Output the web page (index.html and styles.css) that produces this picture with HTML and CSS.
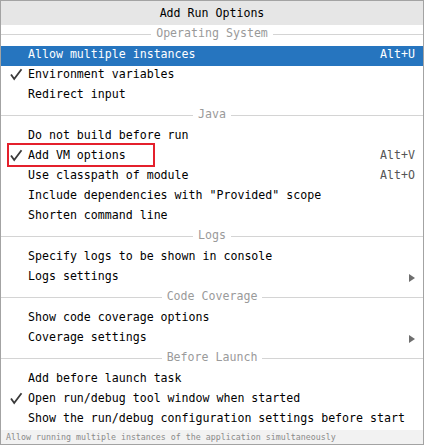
FILE: index.html
```html
<!DOCTYPE html>
<html>
<head>
<meta charset="utf-8">
<link rel="stylesheet" href="styles.css">
</head>
<body>
<div class="popup">
  <div class="title">Add Run Options</div>

  <div class="sep"><span class="line"></span><span class="sep-text">Operating System</span><span class="line"></span></div>
  <div class="row selected"><span class="gutter"></span><span class="label">Allow multiple instances</span><span class="key">Alt+U</span></div>
  <div class="row"><span class="gutter"><svg class="check" width="13" height="13" viewBox="0 0 13 13"><path d="M1 6.5 L4.2 11 L11.5 1.2" fill="none" stroke="#3a3a3a" stroke-width="1.8"/></svg></span><span class="label">Environment variables</span></div>
  <div class="row"><span class="gutter"></span><span class="label">Redirect input</span></div>

  <div class="sep"><span class="line"></span><span class="sep-text">Java</span><span class="line"></span></div>
  <div class="row"><span class="gutter"></span><span class="label">Do not build before run</span></div>
  <div class="row marked"><span class="gutter"><svg class="check" width="13" height="13" viewBox="0 0 13 13"><path d="M1 6.5 L4.2 11 L11.5 1.2" fill="none" stroke="#3a3a3a" stroke-width="1.8"/></svg></span><span class="label">Add VM options</span><span class="key">Alt+V</span><span class="redbox"></span></div>
  <div class="row"><span class="gutter"></span><span class="label">Use classpath of module</span><span class="key">Alt+O</span></div>
  <div class="row"><span class="gutter"></span><span class="label">Include dependencies with "Provided" scope</span></div>
  <div class="row"><span class="gutter"></span><span class="label">Shorten command line</span></div>

  <div class="sep"><span class="line"></span><span class="sep-text">Logs</span><span class="line"></span></div>
  <div class="row"><span class="gutter"></span><span class="label">Specify logs to be shown in console</span></div>
  <div class="row"><span class="gutter"></span><span class="label">Logs settings</span><span class="arrow"></span></div>

  <div class="sep"><span class="line"></span><span class="sep-text">Code Coverage</span><span class="line"></span></div>
  <div class="row"><span class="gutter"></span><span class="label">Show code coverage options</span></div>
  <div class="row"><span class="gutter"></span><span class="label">Coverage settings</span><span class="arrow"></span></div>

  <div class="sep"><span class="line"></span><span class="sep-text">Before Launch</span><span class="line"></span></div>
  <div class="row"><span class="gutter"></span><span class="label">Add before launch task</span></div>
  <div class="row"><span class="gutter"><svg class="check" width="13" height="13" viewBox="0 0 13 13"><path d="M1 6.5 L4.2 11 L11.5 1.2" fill="none" stroke="#3a3a3a" stroke-width="1.8"/></svg></span><span class="label">Open run/debug tool window when started</span></div>
  <div class="row"><span class="gutter"></span><span class="label">Show the run/debug configuration settings before start</span></div>

  <div class="status">Allow running multiple instances of the application simultaneously</div>
</div>
</body>
</html>
```
FILE: styles.css
```css
html, body {
  margin: 0;
  padding: 0;
  background: #ffffff;
}

.popup {
  width: 422px;
  border: 1px solid #a3a3a3;
  background: #ffffff;
  font-family: "DejaVu Sans Mono", "Liberation Mono", monospace;
  font-size: 11.6px;
  color: #000000;
  display: flex;
  flex-direction: column;
}

.title {
  height: 24px;
  background: #e6e6e6;
  display: flex;
  align-items: center;
  justify-content: center;
  padding-bottom: 1px;
  box-sizing: border-box;
  font-weight: normal;
}

.sep {
  height: 21px;
  display: flex;
  align-items: center;
  color: #9a9a9a;
}

.sep .line {
  flex: 1;
  height: 1px;
  background: #d4d4d4;
  margin-top: -3px;
}

.sep-text {
  padding: 0 5px;
  margin-top: -5px;
}

.row {
  height: 20px;
  display: flex;
  align-items: center;
  padding-right: 8px;
  position: relative;
  box-sizing: border-box;
}

.row > * {
  margin-top: -5px;
}

.row.selected {
  background: #2675bf;
  color: #ffffff;
}

.gutter {
  width: 27px;
  flex: none;
  display: flex;
  align-items: center;
  padding-left: 9px;
  box-sizing: border-box;
}

.check {
  display: block;
  margin-top: 2px;
}

.label {
  flex: 1;
  white-space: nowrap;
}

.key {
  color: #555555;
}

.row.selected .key {
  color: #ffffff;
}

.arrow {
  width: 0;
  height: 0;
  border-top: 4px solid transparent;
  border-bottom: 4px solid transparent;
  border-left: 6px solid #6e6e6e;
  margin-top: 0 !important;
}

.redbox {
  position: absolute;
  left: 6px;
  top: -4px;
  width: 148px;
  height: 24px;
  border: 2px solid #e4202c;
  box-sizing: border-box;
  margin-top: 0 !important;
}

.status {
  height: 14px;
  background: #f2f2f2;
  color: #8a8a8a;
  font-size: 8.3px;
  display: flex;
  align-items: center;
  padding-left: 5px;
  white-space: nowrap;
}
```
